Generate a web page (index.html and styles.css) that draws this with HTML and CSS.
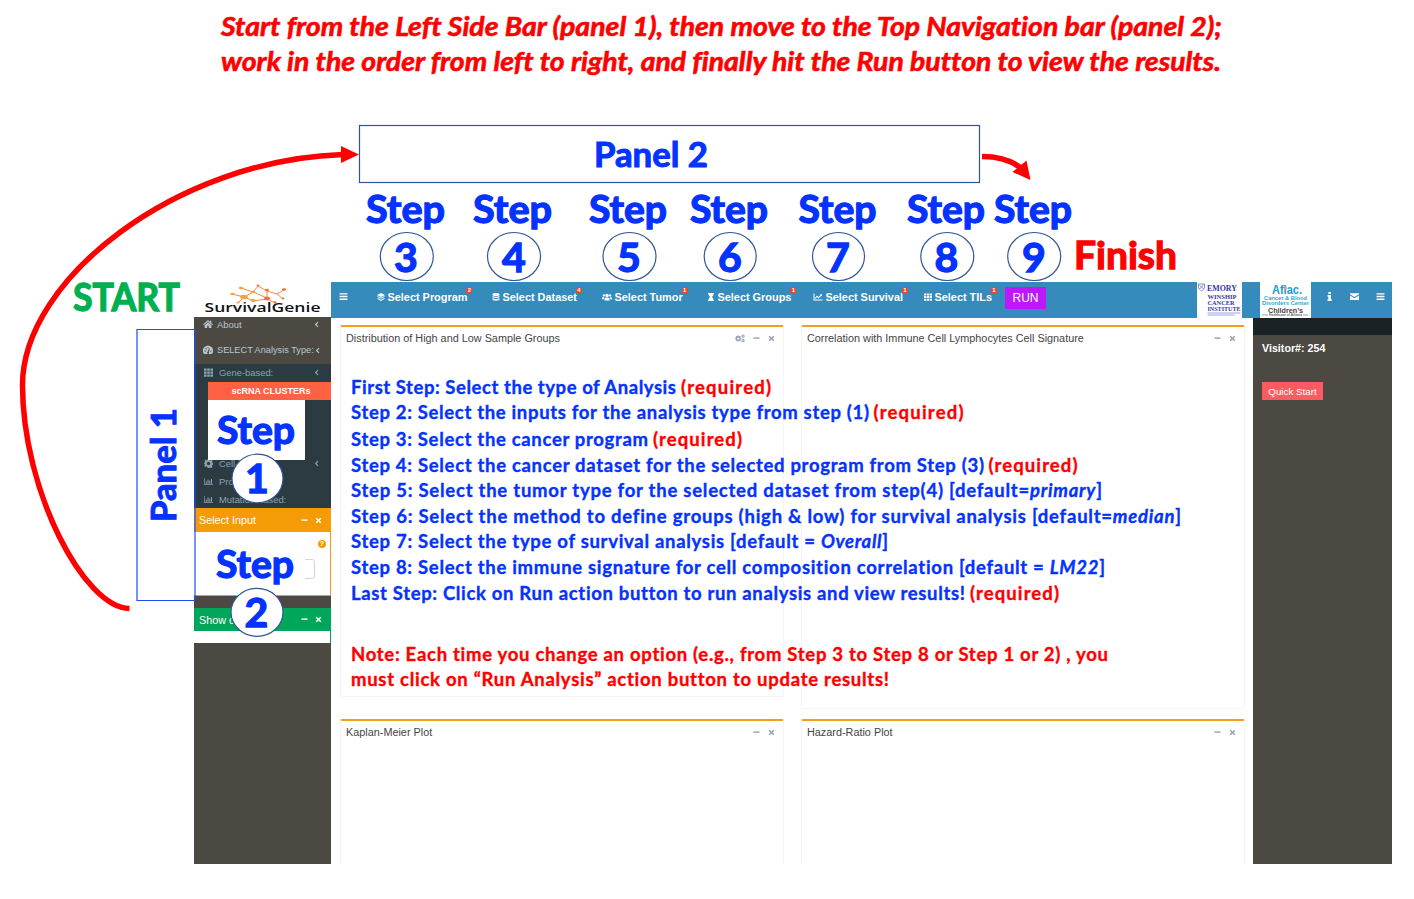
FILE: index.html
```html
<!DOCTYPE html>
<html lang="en">
<head>
<meta charset="utf-8">
<title>SurvivalGenie quick start</title>
<link rel="stylesheet" href="styles.css">
</head>
<body>
<svg class="defs" width="0" height="0">
  <symbol id="bars" viewBox="0 0 16 16"><path d="M1 2h14v2.600H1zM1 6.700h14v2.600H1zM1 11.400h14V14H1z"/></symbol>
  <symbol id="layers" viewBox="0 0 16 16"><path d="M8 0l8 4-8 4-8-4zM2 6.500l6 3 6-3 2 1.200-8 4-8-4zM2 10.500l6 3 6-3 2 1.200L8 16l-8-4.300z"/></symbol>
  <symbol id="database" viewBox="0 0 16 16"><path d="M1 2.500C1-.6 15-.6 15 2.500v1.300C15 6.500 1 6.500 1 3.800zM1 6c3 2 11 2 14 0v2c0 2.700-14 2.700-14 0zM1 10.500c3 2 11 2 14 0v2.700c0 3-14 3-14 0z"/></symbol>
  <symbol id="users" viewBox="0 0 20 16"><circle cx="10" cy="5" r="3.500"/><circle cx="3.700" cy="5" r="2.300"/><circle cx="16.300" cy="5" r="2.300"/><path d="M5 15v-3c0-2 2-3 5-3s5 1 5 3v3zM0 12.500v-2C0 8.500 2 8 4.500 8.500 4 9.500 3.700 10.500 3.700 12.500zM20 12.500v-2c0-2-2-2.500-4.500-2 .5 1 .8 2 .8 4z"/></symbol>
  <symbol id="hourglass" viewBox="0 0 14 16"><path d="M1 0h12v2.200h-1C12 5 10 7 8.600 8 10 9 12 11 12 13.800h1V16H1v-2.200h1C2 11 4 9 5.400 8 4 7 2 5 2 2.200H1z"/></symbol>
  <symbol id="line" viewBox="0 0 18 16"><path d="M0 1h2v12h16v2H0zM3 10l4-5 3 3 4-4-1.500-1.500H17V7l-1.500-1.500L10 11 7 8l-3 4z"/></symbol>
  <symbol id="th" viewBox="0 0 16 16"><path d="M0 1h4.500v4H0zM5.700 1h4.600v4H5.700zM11.500 1H16v4h-4.500zM0 6.200h4.500v4H0zM5.700 6.200h4.600v4H5.700zM11.500 6.200H16v4h-4.500zM0 11.400h4.500v4H0zM5.700 11.400h4.600v4H5.700zM11.500 11.400H16v4h-4.500z"/></symbol>
  <symbol id="home" viewBox="0 0 18 16"><path d="M9 1l3.500 3V2H15v4.200L18 9l-1.200 1.200L9 3.300l-7.800 6.900L0 9zM9 4.800l6 5.300V15h-4.500v-4h-3v4H3v-4.900z"/></symbol>
  <symbol id="gauge" viewBox="0 0 18 16"><path fill-rule="evenodd" d="M2 15a9 9 0 1 1 14 0zM8 11.500a1.800 1.800 0 1 0 2.500.3L12 5.500l-1.300-.4zM3 9v2h2V9zM4.500 5v2h2V5zM8 3v2h2V3zM13 9v2h2V9z"/></symbol>
  <symbol id="gear" viewBox="0 0 16 16"><path fill-rule="evenodd" d="M6.500 0h3l.5 2 1.500.7 2-1 2 2-1 2 .5 1.300 1.500.5v2.500l-2 .5-.5 1.500 1 2-2 2-2-1-1.500.5-.5 2h-3L6 13.500 4.500 13l-2 1-2-2 1-2L1 8.500l-1-.3V6.500L1.500 6l.5-1.500-1-1.500 2-2 2 1L6 2zM8 5a3 3 0 1 0 0 6 3 3 0 0 0 0-6z"/></symbol>
  <symbol id="chart" viewBox="0 0 18 16"><path d="M0 1h1.300v12.700H18V15H0zM3.500 8h2v4.500h-2zM7 4h2v8.500H7zM10.500 6h2v6.500h-2zM14 3h2v9.500h-2z"/></symbol>
  <symbol id="gears" viewBox="0 0 20 16"><path fill-rule="evenodd" d="M5 2h3l.4 1.700 1.600-.5 1.500 1.500-.7 1.600 1.700.7v2.500l-1.700.6.700 1.500-1.500 1.700-1.600-.7L8 14H5l-.6-1.500-1.600.7L1.300 11.700l.7-1.600L.5 9.500V7l1.500-.7-.7-1.600 1.500-1.500 1.600.5zM6.500 5.800a2.400 2.400 0 1 0 0 4.800 2.400 2.400 0 0 0 0-4.800zM16 0a3.300 3.300 0 1 1 0 6.600A3.300 3.300 0 0 1 16 0zm0 2.200a1.100 1.100 0 1 0 0 2.200 1.100 1.100 0 0 0 0-2.200zM16 9a3.300 3.300 0 1 1 0 6.600A3.300 3.300 0 0 1 16 9zm0 2.200a1.100 1.100 0 1 0 0 2.200 1.100 1.100 0 0 0 0-2.200z"/></symbol>
  <symbol id="minus" viewBox="0 0 16 16"><path d="M1 5.500h14v3.200H1z"/></symbol>
  <symbol id="times" viewBox="0 0 16 16"><path d="M4 1.500l4 4 4-4L14.500 4l-4 4 4 4-2.500 2.500-4-4-4 4L1.500 12l4-4-4-4z"/></symbol>
  <symbol id="angle" viewBox="0 0 16 16"><path d="M10.500 1.500l2 2L8 8l4.500 4.500-2 2L4 8z"/></symbol>
  <symbol id="info" viewBox="0 0 16 16"><path d="M6 0h4.500v3.500H6zM4.500 5.500h6V13H12v3H4.500v-3H6V8.500H4.500z"/></symbol>
  <symbol id="mail" viewBox="0 0 16 16"><path d="M0 2h16v1.800L8 9 0 3.800zM0 6l8 5 8-5v8H0z"/></symbol>
</svg>

<div class="app">
  <aside class="sidebar">
    <div class="brand">
      <svg viewBox="0 0 137 35" width="137" height="35">
        <g fill="none" stroke="#f58a4b" stroke-width="1"><path d="M47 6l12 4 5-6 9 5 0 7-14-6-9 5-12-3M50 15l-6 6M50 15l9 4 14-2M73 9l10 3 7-4M83 12l6 5M73 17l8 4" /></g>
        <g fill="#f9a03f"><ellipse cx="47" cy="6" rx="2.200" ry="1.300"/><ellipse cx="38.500" cy="12" rx="2.200" ry="1.300"/><ellipse cx="50" cy="15" rx="3.800" ry="2.300"/><ellipse cx="59" cy="10" rx="2.500" ry="1.300"/><ellipse cx="59" cy="18.500" rx="2.500" ry="1.400"/><ellipse cx="44" cy="20.500" rx="1.600" ry="1"/></g>
        <g fill="#f46f43"><ellipse cx="64" cy="3.500" rx="1.500" ry="1"/><ellipse cx="73" cy="8" rx="2" ry="1.300"/><ellipse cx="73" cy="16.500" rx="3" ry="1.900"/><ellipse cx="90" cy="7.500" rx="2.200" ry="1.300"/><ellipse cx="89" cy="16.500" rx="1.500" ry="1"/><ellipse cx="81" cy="20.300" rx="1.700" ry="1.100"/></g>
        <text class="brand-name" x="10.500" y="30" textLength="116" lengthAdjust="spacingAndGlyphs">SurvivalGenie</text>
      </svg>
    </div>
    <div class="menu-item first"><svg class="mi"><use href="#home"/></svg><span>About</span><svg class="ar"><use href="#angle"/></svg></div>
    <div class="menu-item second"><svg class="mi"><use href="#gauge"/></svg><span>SELECT Analysis Type:</span><svg class="ar"><use href="#angle"/></svg></div>
    <div class="submenu">
      <div class="sub-item gene"><svg class="mi"><use href="#th"/></svg><span>Gene-based:</span><svg class="ar"><use href="#angle"/></svg></div>
      <div class="cluster">scRNA CLUSTERs</div>
      <div class="blank"></div>
      <div class="sub-item short"><svg class="mi"><use href="#gear"/></svg><span>Cell-based:</span><svg class="ar"><use href="#angle"/></svg></div>
      <div class="sub-item"><svg class="mi"><use href="#chart"/></svg><span>Protein-based:</span></div>
      <div class="sub-item"><svg class="mi"><use href="#chart"/></svg><span>Mutation-based:</span></div>
    </div>
    <div class="side-head orange"><span>Select Input</span><svg><use href="#minus"/></svg><svg><use href="#times"/></svg></div>
    <div class="input-body"><span class="help">?</span><span class="field"></span></div>
    <div class="side-head green"><span>Show data</span><svg><use href="#minus"/></svg><svg><use href="#times"/></svg></div>
    <div class="green-body"></div>
  </aside>

  <div class="right">
    <header class="topbar">
      <svg class="burger"><use href="#bars"/></svg>
      <div class="nav"><svg><use href="#layers"/></svg><span>Select Program</span><b>2</b></div>
      <div class="nav"><svg><use href="#database"/></svg><span>Select Dataset</span><b>4</b></div>
      <div class="nav"><svg class="w"><use href="#users"/></svg><span>Select Tumor</span><b>1</b></div>
      <div class="nav"><svg><use href="#hourglass"/></svg><span>Select Groups</span><b>1</b></div>
      <div class="nav"><svg class="w"><use href="#line"/></svg><span>Select Survival</span><b>1</b></div>
      <div class="nav"><svg><use href="#th"/></svg><span>Select TILs</span><b>1</b></div>
      <div class="run">RUN</div>
      <svg class="emory" viewBox="0 0 45 36">
        <rect width="45" height="36" fill="#fff"/>
        <path d="M1.500 2h6v3c0 2-1.500 3-3 4-1.500-1-3-2-3-4zM2.500 3l4 4M6.500 3l-4 4" fill="none" stroke="#6870bd" stroke-width=".8"/>
        <g fill="#3535a5" font-family="Liberation Serif, serif" font-weight="bold">
          <text x="10" y="8.500" font-size="9" textLength="30" lengthAdjust="spacingAndGlyphs">EMORY</text>
          <text x="10.500" y="16.800" font-size="7" textLength="29" lengthAdjust="spacingAndGlyphs">WINSHIP</text>
          <text x="10.500" y="22.800" font-size="7" textLength="27" lengthAdjust="spacingAndGlyphs">CANCER</text>
          <text x="10.500" y="29" font-size="7" textLength="33" lengthAdjust="spacingAndGlyphs">INSTITUTE</text>
        </g>
        <path d="M10.500 31h33M10.500 33h27" stroke="#8990cf" stroke-width=".8"/>
      </svg>
      <svg class="aflac" viewBox="0 0 51 36">
        <rect width="51" height="36" fill="#fff"/>
        <g font-family="Liberation Sans, sans-serif" font-weight="bold">
          <text x="12" y="11.500" font-size="12" fill="#1e9ad0" textLength="30" lengthAdjust="spacingAndGlyphs">Aflac.</text>
          <text x="4" y="17.700" font-size="6" fill="#35a5d5" textLength="43" lengthAdjust="spacingAndGlyphs">Cancer &amp; Blood</text>
          <text x="2" y="23" font-size="6" fill="#35a5d5" textLength="47" lengthAdjust="spacingAndGlyphs">Disorders Center</text>
          <text x="8" y="30.500" font-size="7.500" fill="#444" textLength="35" lengthAdjust="spacingAndGlyphs">Children’s</text>
          <text x="9" y="34.300" font-size="3.600" fill="#666" textLength="33" lengthAdjust="spacingAndGlyphs">Healthcare of Atlanta</text>
        </g>
        <path d="M2 33h6M43 33h5" stroke="#777" stroke-width=".7"/><circle cx="25.500" cy="6" r="1.400" fill="#f0a040"/>
      </svg>
      <svg class="ti"><use href="#info"/></svg>
      <svg class="ti"><use href="#mail"/></svg>
      <svg class="ti"><use href="#bars"/></svg>
    </header>
    <div class="content">
      <main class="plots">
        <section class="box b1"><span>Distribution of High and Low Sample Groups</span><svg class="g"><use href="#gears"/></svg><svg><use href="#minus"/></svg><svg><use href="#times"/></svg></section>
        <section class="box b2"><span>Correlation with Immune Cell Lymphocytes Cell Signature</span><svg><use href="#minus"/></svg><svg><use href="#times"/></svg></section>
        <section class="box b3"><span>Kaplan-Meier Plot</span><svg><use href="#minus"/></svg><svg><use href="#times"/></svg></section>
        <section class="box b3"><span>Hazard-Ratio Plot</span><svg><use href="#minus"/></svg><svg><use href="#times"/></svg></section>
      </main>
      <aside class="control">
        <div class="tabs"></div>
        <div class="visitor">Visitor#: 254</div>
        <div class="quick">Quick Start</div>
      </aside>
    </div>
  </div>
</div>

<svg class="notes" viewBox="0 0 1414 899" width="1414" height="899">
  <g class="red title">
    <text x="221" y="36" textLength="1001" lengthAdjust="spacingAndGlyphs">Start from the Left Side Bar (panel 1), then move to the Top Navigation bar (panel 2);</text>
    <text x="221" y="70.500" textLength="1000" lengthAdjust="spacingAndGlyphs">work in the order from left to right, and finally hit the Run button to view the results.</text>
  </g>
  <g class="arrow"><path d="M129.500 608.500C84 608 22.500 490 22.500 385C22.500 280 175 160 343 154.500"/><path d="M982 156.500C1000 156.500 1012 161 1021 168"/></g>
  <path class="head" d="M341 146l18 8.500-18 8.500zM1026.500 160.500l4 19.500-18-8z"/>
  <rect class="navy" x="359.500" y="125.500" width="620" height="57"/>
  <path class="blueline" d="M194.500 329.500h-57.500v271h57.500"/>
  <path class="blueline thin" d="M195 329.500v271"/>
  <rect x="213" y="545" width="92" height="38" fill="#fff"/>
  <g class="navy">
    <ellipse cx="406.800" cy="256.500" rx="26.500" ry="24"/><ellipse cx="514" cy="256.500" rx="26.500" ry="24"/><ellipse cx="629.500" cy="256.500" rx="26.500" ry="24"/><ellipse cx="730.200" cy="256.500" rx="26" ry="24"/><ellipse cx="838.500" cy="256.500" rx="26" ry="24"/><ellipse cx="947.300" cy="256.500" rx="26.500" ry="24"/><ellipse cx="1034.200" cy="256.500" rx="26.500" ry="24"/>
    <ellipse cx="257.500" cy="478.500" rx="25.500" ry="24.300"/><ellipse cx="257" cy="612.300" rx="26" ry="24"/>
  </g>
  <g class="blue step">
    <text x="366" y="222.500" textLength="79" lengthAdjust="spacingAndGlyphs">Step</text><text x="473" y="222.500" textLength="79" lengthAdjust="spacingAndGlyphs">Step</text><text x="589" y="222.500" textLength="78" lengthAdjust="spacingAndGlyphs">Step</text><text x="690" y="222.500" textLength="78" lengthAdjust="spacingAndGlyphs">Step</text><text x="798.500" y="222.500" textLength="78" lengthAdjust="spacingAndGlyphs">Step</text><text x="907" y="222.500" textLength="78" lengthAdjust="spacingAndGlyphs">Step</text><text x="994" y="222.500" textLength="78" lengthAdjust="spacingAndGlyphs">Step</text>
    <text x="217" y="444" textLength="78" lengthAdjust="spacingAndGlyphs">Step</text><text x="216" y="578" textLength="78" lengthAdjust="spacingAndGlyphs">Step</text>
  </g>
  <g class="blue num">
    <text x="406" y="271.500">3</text><text x="514" y="271.500">4</text><text x="629" y="271.500">5</text><text x="730" y="271.500">6</text><text x="838" y="271.500">7</text><text x="946.500" y="271.500">8</text><text x="1034" y="271.500">9</text><text x="257" y="492.500">1</text><text x="256.500" y="627">2</text>
  </g>
  <text class="blue panel" x="594" y="166.500" textLength="114" lengthAdjust="spacingAndGlyphs">Panel 2</text>
  <text class="blue panel" transform="translate(176 522) rotate(-90)" textLength="114" lengthAdjust="spacingAndGlyphs">Panel 1</text>
  <text class="green-text step" x="73" y="311" textLength="107" lengthAdjust="spacingAndGlyphs">START</text>
  <text class="red step" x="1074" y="269" textLength="103" lengthAdjust="spacingAndGlyphs">Finish</text>
  <g class="blue body-text">
    <text x="351" y="394" textLength="325">First Step: Select the type of Analysis</text>
    <text x="351" y="419" textLength="518">Step 2: Select the inputs for the analysis type from step (1)</text>
    <text x="351" y="445.500" textLength="297">Step 3: Select the cancer program</text>
    <text x="351" y="471.500" textLength="633">Step 4: Select the cancer dataset for the selected program from Step (3)</text>
    <text x="351" y="496.500" textLength="751">Step 5: Select the tumor type for the selected dataset from step(4) [default=<tspan class="it">primary</tspan>]</text>
    <text x="351" y="522.500" textLength="830">Step 6: Select the method to define groups (high &amp; low) for survival analysis [default=<tspan class="it">median</tspan>]</text>
    <text x="351" y="547.500" textLength="537">Step 7: Select the type of survival analysis [default = <tspan class="it">Overall</tspan>]</text>
    <text x="351" y="573.500" textLength="754">Step 8: Select the immune signature for cell composition correlation [default = <tspan class="it">LM22</tspan>]</text>
    <text x="351" y="599.500" textLength="614">Last Step: Click on Run action button to run analysis and view results!</text>
  </g>
  <g class="red body-text">
    <text x="681" y="394" textLength="90">(required)</text>
    <text x="873.500" y="419" textLength="90">(required)</text>
    <text x="653" y="445.500" textLength="89">(required)</text>
    <text x="988.500" y="471.500" textLength="89">(required)</text>
    <text x="970" y="599.500" textLength="89">(required)</text>
    <text x="351" y="660.500" textLength="757">Note: Each time you change an option (e.g., from Step 3 to Step 8 or Step 1 or 2) , you</text>
    <text x="351" y="685.500" textLength="538">must click on “Run Analysis” action button to update results!</text>
  </g>
</svg>
</body>
</html>
```
FILE: styles.css
```css
* { box-sizing: border-box; }
body { margin: 0; width: 1414px; height: 899px; overflow: hidden; padding: 282px 22px 35px 194px; background: #fff; font-family: "Liberation Sans", sans-serif; position: relative; }
svg { fill: currentColor; flex: none; }
.defs { position: absolute; }
.app { display: flex; height: 582px; }
.sidebar { width: 137px; background: #4b4942; color: #b8c7ce; font-size: 9.400px; flex: none; }
.brand { height: 35px; background: #fff; }
.brand svg { display: block; }
.brand-name { font: 600 13px "Open Sans", sans-serif; fill: #111; }
.menu-item, .sub-item { display: flex; align-items: center; padding-left: 9px; white-space: nowrap; }
.menu-item span, .sub-item span { flex: 1; }
.first { height: 14px; }
.second { height: 33px; padding-top: 5px; }
.second span { font-size: 9.200px; }
.first .mi, .second .mi { width: 10px; height: 10px; margin-right: 4px; }
.mi { width: 9px; height: 9px; margin-right: 6px; }
.ar { width: 7px; height: 7px; margin-right: 11px; }
.submenu { height: 144px; background: #2c3b41; color: #8aa4af; }
.sub-item { height: 18px; padding-left: 10px; }
.gene { padding-bottom: 1px; }
.short { margin-top: -6px; }
.cluster { height: 18px; margin-left: 14px; background: #ff6242; color: #fff; font-weight: bold; font-size: 9px; text-align: center; line-height: 18px; padding-left: 3px; }
.blank { position: relative; width: 97px; height: 60px; margin-left: 14px; background: #fff; }
.side-head { height: 24px; display: flex; align-items: center; padding: 0 9px 0 5px; color: #fff; font-size: 10.800px; }
.side-head span { flex: 1; }
.side-head svg { width: 7px; height: 7px; margin-left: 7px; }
.orange { background: #f59b05; }
.green { background: #00a65a; margin-top: 12px; height: 23px; }
.green-body { height: 12px; background: #fff; border-right: 1px solid #00a65a; }
.input-body { height: 64px; background: #fff; border: solid #f59b05; border-width: 0 1px 1px 0; display: flex; flex-direction: column; align-items: flex-end; padding: 8px 4px 0; }
.help { width: 8px; height: 8px; border-radius: 50%; background: #f59b05; color: #fff; font: bold 7px/8px "Liberation Sans", sans-serif; text-align: center; }
.field { width: 30px; height: 20px; margin: 11px 11px 0 0; border: 1px solid #d5d5d5; border-radius: 3px; }
.right { flex: 1; min-width: 0; display: flex; flex-direction: column; }
.topbar { height: 36px; background: #368bbd; color: #fff; display: grid; grid-template-columns: 38px 115px 110px 105px 106px 111px 81px 192px 63px 65px 25px 26px 16px; padding-left: 8px; align-items: start; }
.burger { width: 9px; height: 9px; margin-top: 10px; }
.nav { display: flex; align-items: center; font-size: 10.900px; font-weight: bold; margin-top: 8px; height: 14px; white-space: nowrap; }
.nav svg { width: 8px; height: 8px; margin-right: 2.500px; }
.nav .w { width: 10px; }
.nav b { align-self: flex-start; margin-top: -3px; margin-left: -1px; width: 6px; height: 7px; background: #dd4b39; border-radius: 1px; font-size: 6px; line-height: 7px; text-align: center; flex: none; }
.run { width: 41px; height: 22px; margin-top: 5px; background: #bd18fb; font-size: 12px; line-height: 22px; text-align: center; }
.emory { width: 45px; height: 36px; }
.aflac { width: 51px; height: 36px; }
.ti { width: 9px; height: 9px; margin-top: 10px; }
.content { flex: 1; min-height: 0; display: flex; }
.plots { flex: 1; display: grid; grid-template-columns: 444px 444px; grid-template-rows: 394px 145px; column-gap: 17px; padding: 7px 9px 0; overflow: hidden; align-items: start; }
.box { display: flex; align-items: flex-start; border: 1px solid #f5f5f5; border-top: 2px solid #f1a01c; border-radius: 2px; padding: 5px 8px 0 5px; font-size: 10.850px; line-height: 13px; color: #444; }
.box span { flex: 1; white-space: nowrap; }
.box svg { width: 7px; height: 7px; margin: 3px 0 0 8px; color: #97a0b3; }
.box .g { width: 10px; height: 9px; margin-top: 2px; }
.b1 { height: 372px; }
.b2 { height: 384px; }
.b3 { height: 160px; border-bottom: 0; }
.control { width: 139px; flex: none; background: #4b4942; color: #fff; }
.tabs { height: 17px; background: #1a2226; }
.visitor { font-size: 10.700px; font-weight: bold; margin: 6px 0 0 9px; line-height: 14px; }
.quick { width: 61px; height: 18px; margin: 27px 0 0 9px; background: #ff5a62; font-size: 9.800px; line-height: 19px; text-align: center; }
.notes { position: absolute; left: 0; top: 0; font-family: Lato, sans-serif; font-weight: bold; font-variant-ligatures: none; }
.red { fill: #ff0000; stroke: #ff0000; }
.blue { fill: #0432ff; stroke: #0432ff; }
.green-text { fill: #00b050; stroke: #00b050; }
.title { font-size: 26px; font-style: italic; font-weight: 700; stroke-width: .6; }
.arrow { fill: none; stroke: #ff0000; stroke-width: 5.500; }
.head { fill: #ff0000; }
.navy { fill: #fff; stroke: #2f5597; stroke-width: 1.200; }
.blueline { fill: none; stroke: #1f4cf5; stroke-width: 1.200; }
.step { font-size: 38px; stroke-width: 1.300; }
.num { font-size: 41px; text-anchor: middle; stroke-width: 1.300; }
.panel { font-size: 34px; stroke-width: 1; }
.body-text { font-size: 18.500px; stroke-width: .35; }
.it { font-style: italic; }
```
